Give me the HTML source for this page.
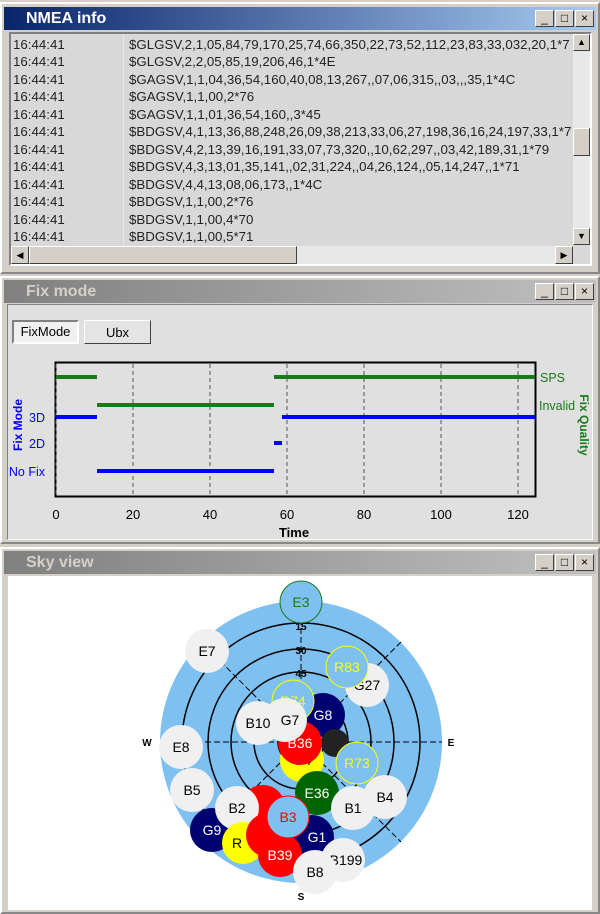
<!DOCTYPE html><html><head><style>
*{margin:0;padding:0;box-sizing:border-box}
body{width:600px;height:914px;background:#d4d0c8;font-family:"Liberation Sans",sans-serif;position:relative;overflow:hidden}
.win{position:absolute;left:0;width:600px;border:2px solid #888;background:#d4d0c8;border-top-color:#fff;border-left-color:#fff}
.tb{position:absolute;left:4px;right:4px;height:23px;font-weight:bold;font-size:16px;padding-left:22px;line-height:23px}
.btns{position:absolute;right:2px;top:3px;display:flex;gap:1px}
.btns span{width:19px;height:17px;background:#d4d0c8;border:1px solid;border-color:#fff #404040 #404040 #fff;font-size:12px;line-height:14px;text-align:center;color:#000;font-weight:normal}
.row{position:absolute;left:13px;height:17px;font-size:13.3px;color:#222;line-height:17px;white-space:nowrap;width:560px;overflow:hidden}
.abs{position:absolute}
</style></head><body>
<!-- NMEA -->
<div class="win" style="top:2px;height:272px"></div>
<div class="tb" style="top:7px;background:linear-gradient(90deg,#0a246a,#a6caf0);color:#fff">NMEA info<div class="btns"><span>_</span><span>□</span><span>×</span></div></div>
<div class="abs" style="left:9px;top:32px;width:583px;height:234px;border:2px solid;border-color:#808080 #fff #fff #808080;background:#d8d8d8;overflow:hidden">
<div style="position:absolute;left:112px;top:0;width:1px;height:230px;background:#e8e8e8"></div>
</div>
<div class="abs" style="left:573px;top:34px;width:17px;height:211px;background:#e8e8e8"></div>
<div class="abs" style="left:573px;top:34px;width:17px;height:17px;border:1px solid;border-color:#fff #404040 #404040 #fff;background:#d4d0c8;font-size:9px;text-align:center;line-height:15px">▲</div>
<div class="abs" style="left:573px;top:128px;width:17px;height:28px;border:1px solid;border-color:#fff #404040 #404040 #fff;background:#d4d0c8"></div>
<div class="abs" style="left:573px;top:228px;width:17px;height:17px;border:1px solid;border-color:#fff #404040 #404040 #fff;background:#d4d0c8;font-size:9px;text-align:center;line-height:15px">▼</div>
<div class="abs" style="left:11px;top:246px;width:562px;height:18px;background:#e8e8e8"></div>
<div class="abs" style="left:11px;top:246px;width:18px;height:18px;border:1px solid;border-color:#fff #404040 #404040 #fff;background:#d4d0c8;font-size:9px;text-align:center;line-height:16px">◀</div>
<div class="abs" style="left:29px;top:246px;width:268px;height:18px;border:1px solid;border-color:#fff #404040 #404040 #fff;background:#d4d0c8"></div>
<div class="abs" style="left:555px;top:246px;width:18px;height:18px;border:1px solid;border-color:#fff #404040 #404040 #fff;background:#d4d0c8;font-size:9px;text-align:center;line-height:16px">▶</div>
<div class="row" style="top:36px">16:44:41<span class="abs" style="left:116px">$GLGSV,2,1,05,84,79,170,25,74,66,350,22,73,52,112,23,83,33,032,20,1*7</span></div>
<div class="row" style="top:53px">16:44:41<span class="abs" style="left:116px">$GLGSV,2,2,05,85,19,206,46,1*4E</span></div>
<div class="row" style="top:71px">16:44:41<span class="abs" style="left:116px">$GAGSV,1,1,04,36,54,160,40,08,13,267,,07,06,315,,03,,,35,1*4C</span></div>
<div class="row" style="top:88px">16:44:41<span class="abs" style="left:116px">$GAGSV,1,1,00,2*76</span></div>
<div class="row" style="top:106px">16:44:41<span class="abs" style="left:116px">$GAGSV,1,1,01,36,54,160,,3*45</span></div>
<div class="row" style="top:123px">16:44:41<span class="abs" style="left:116px">$BDGSV,4,1,13,36,88,248,26,09,38,213,33,06,27,198,36,16,24,197,33,1*7</span></div>
<div class="row" style="top:141px">16:44:41<span class="abs" style="left:116px">$BDGSV,4,2,13,39,16,191,33,07,73,320,,10,62,297,,03,42,189,31,1*79</span></div>
<div class="row" style="top:158px">16:44:41<span class="abs" style="left:116px">$BDGSV,4,3,13,01,35,141,,02,31,224,,04,26,124,,05,14,247,,1*71</span></div>
<div class="row" style="top:176px">16:44:41<span class="abs" style="left:116px">$BDGSV,4,4,13,08,06,173,,1*4C</span></div>
<div class="row" style="top:193px">16:44:41<span class="abs" style="left:116px">$BDGSV,1,1,00,2*76</span></div>
<div class="row" style="top:211px">16:44:41<span class="abs" style="left:116px">$BDGSV,1,1,00,4*70</span></div>
<div class="row" style="top:228px">16:44:41<span class="abs" style="left:116px">$BDGSV,1,1,00,5*71</span></div>
<!-- Fix mode -->
<div class="win" style="top:276px;height:268px"></div>
<div class="tb" style="top:280px;background:linear-gradient(90deg,#808080,#c0c0c0);color:#d4d0c8">Fix mode<div class="btns"><span>_</span><span>□</span><span>×</span></div></div>
<div class="abs" style="left:7px;top:304px;width:586px;height:236px;border:1px solid;border-color:#808080 #fff #fff #808080;background:#e0e0e0"></div>
<div class="abs" style="left:12px;top:320px;width:67px;height:24px;border:2px solid;border-color:#808080 #fff #fff #808080;background:#f0f0f0;font-size:13px;text-align:center;line-height:20px">FixMode</div>
<div class="abs" style="left:84px;top:320px;width:67px;height:24px;border:1px solid;border-color:#fff #404040 #404040 #fff;background:#e4e4e4;font-size:13px;text-align:center;line-height:24px">Ubx</div>
<svg class="abs" style="left:0;top:350px" width="600" height="195" font-family="Liberation Sans" font-size="13">
<rect x="55.5" y="12.5" width="480" height="134" fill="none" stroke="#000" stroke-width="2"/>
<g stroke="#555" stroke-dasharray="4,3">
<line x1="56" y1="14" x2="56" y2="146"/><line x1="133" y1="14" x2="133" y2="146"/><line x1="210" y1="14" x2="210" y2="146"/><line x1="287" y1="14" x2="287" y2="146"/><line x1="364" y1="14" x2="364" y2="146"/><line x1="441" y1="14" x2="441" y2="146"/><line x1="518" y1="14" x2="518" y2="146"/></g>
<g stroke="#1a7a1a" stroke-width="4"><line x1="56" y1="27" x2="97" y2="27"/><line x1="274" y1="27" x2="535" y2="27"/><line x1="97" y1="55" x2="274" y2="55"/></g>
<g stroke="#0000ff" stroke-width="4"><line x1="56" y1="67" x2="97" y2="67"/><line x1="282" y1="67" x2="535" y2="67"/><line x1="274" y1="93" x2="282" y2="93"/><line x1="97" y1="121" x2="274" y2="121"/></g>
<g fill="#000" text-anchor="middle"><text x="56" y="169">0</text><text x="133" y="169">20</text><text x="210" y="169">40</text><text x="287" y="169">60</text><text x="364" y="169">80</text><text x="441" y="169">100</text><text x="518" y="169">120</text><text x="294" y="187" font-weight="bold">Time</text></g>
<g fill="#0000ff" text-anchor="end" font-size="12.5"><text x="45" y="72">3D</text><text x="45" y="98">2D</text><text x="45" y="126">No Fix</text></g>
<text transform="translate(22,75) rotate(-90)" fill="#0000ff" font-weight="bold" font-size="12" text-anchor="middle">Fix Mode</text>
<g fill="#1a7a1a" font-size="12.5"><text x="540" y="32">SPS</text><text x="539" y="60">Invalid</text></g>
<text transform="translate(580,75) rotate(90)" fill="#1a7a1a" font-weight="bold" font-size="12" text-anchor="middle">Fix Quality</text>
</svg>
<!-- Sky -->
<div class="win" style="top:547px;height:367px"></div>
<div class="tb" style="top:551px;background:linear-gradient(90deg,#808080,#c0c0c0);color:#d4d0c8">Sky view<div class="btns"><span>_</span><span>□</span><span>×</span></div></div>
<svg class="abs" style="left:8px;top:576px;background:#fff" width="584" height="334" font-family="Liberation Sans" font-size="14" text-anchor="middle">
<g transform="translate(-8,-576)">
<circle cx="301" cy="742" r="141" fill="#7ec0f0"/>
<g fill="none" stroke="#000" stroke-width="1.5"><circle cx="301" cy="742" r="119"/><circle cx="301" cy="742" r="93"/><circle cx="301" cy="742" r="70"/><circle cx="301" cy="742" r="47"/><circle cx="301" cy="742" r="23"/></g>
<g stroke="#000" stroke-dasharray="6,3"><line x1="160" y1="742" x2="442" y2="742"/><line x1="301" y1="601" x2="301" y2="883"/><line x1="201" y1="642" x2="401" y2="842"/><line x1="401" y1="642" x2="201" y2="842"/></g>
<g font-size="10" font-weight="bold"><text x="301" y="630">15</text><text x="301" y="654">30</text><text x="301" y="677">45</text><text x="147" y="746">W</text><text x="451" y="746">E</text><text x="301" y="900">S</text></g>
<g>
<circle cx="207" cy="651" r="22" fill="#f0f0f0"/><text x="207" y="656">E7</text>
<circle cx="367" cy="685" r="22" fill="#f0f0f0"/><text x="367" y="690">G27</text>
<circle cx="347" cy="667" r="21" fill="#7ec0f0" stroke="#ff0"/><text x="347" y="672" fill="#ff0">R83</text>
<circle cx="323" cy="715" r="22" fill="#000070"/><text x="323" y="720" fill="#fff">G8</text>
<circle cx="293" cy="701" r="21" fill="#7ec0f0" stroke="#ff0"/><text x="293" y="706" fill="#ff0">R74</text>
<circle cx="335" cy="743" r="14" fill="#222"/>
<circle cx="302" cy="760" r="22" fill="#ff0"/><text x="302" y="765">G4</text>
<circle cx="300" cy="743" r="22" fill="#f00"/><text x="300" y="748" fill="#fff">B36</text>
<circle cx="285" cy="720" r="22" fill="#f0f0f0"/><text x="290" y="725">G7</text>
<circle cx="258" cy="723" r="22" fill="#f0f0f0"/><text x="258" y="728">B10</text>
<circle cx="357" cy="763" r="21" fill="#7ec0f0" stroke="#ff0"/><text x="357" y="768" fill="#ff0">R73</text>
<circle cx="181" cy="747" r="22" fill="#f0f0f0"/><text x="181" y="752">E8</text>
<circle cx="192" cy="790" r="22" fill="#f0f0f0"/><text x="192" y="795">B5</text>
<circle cx="317" cy="793" r="22" fill="#006400"/><text x="317" y="798" fill="#fff">E36</text>
<circle cx="385" cy="797" r="22" fill="#f0f0f0"/><text x="385" y="802">B4</text>
<circle cx="353" cy="808" r="22" fill="#f0f0f0"/><text x="353" y="813">B1</text>
<circle cx="212" cy="830" r="22" fill="#000070"/><text x="212" y="835" fill="#fff">G9</text>
<circle cx="263" cy="807" r="22" fill="#f00"/>
<circle cx="237" cy="808" r="22" fill="#f0f0f0"/><text x="237" y="813">B2</text>
<circle cx="243" cy="843" r="21" fill="#ff0"/><text x="237" y="848">R</text>
<circle cx="312" cy="837" r="22" fill="#000070"/><text x="317" y="842" fill="#fff">G1</text>
<circle cx="268" cy="835" r="22" fill="#f00"/>
<circle cx="280" cy="855" r="22" fill="#f00"/><text x="280" y="860" fill="#fff">B39</text>
<circle cx="288" cy="817" r="21" fill="#7ec0f0" stroke="#f00"/><text x="288" y="822" fill="#f00">B3</text>
<circle cx="343" cy="860" r="22" fill="#f0f0f0"/><text x="346" y="865">B199</text>
<circle cx="315" cy="872" r="22" fill="#f0f0f0"/><text x="315" y="877">B8</text>
<circle cx="301" cy="602" r="21" fill="#7ec0f0" stroke="#1a7a1a"/><text x="301" y="607" fill="#1a7a1a">E3</text>
</g></g></svg>
</body></html>
